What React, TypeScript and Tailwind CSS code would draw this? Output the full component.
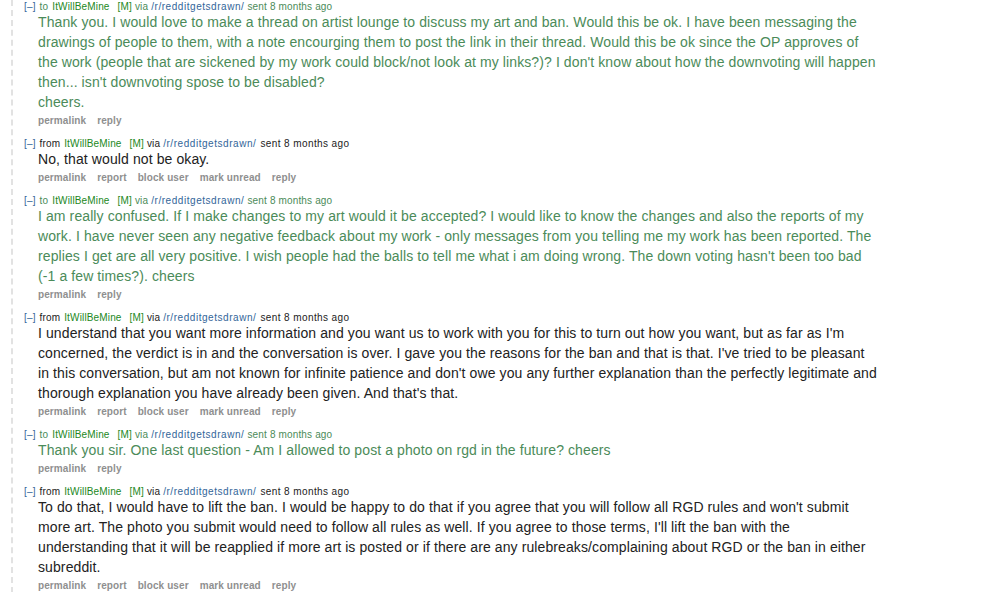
import React from 'react';

interface Message {
  dir: 'to' | 'from';
  paragraphs: string[];
}

const messages: Message[] = [
  {
    dir: 'to',
    paragraphs: [
      "Thank you. I would love to make a thread on artist lounge to discuss my art and ban. Would this be ok. I have been messaging the drawings of people to them, with a note encourging them to post the link in their thread. Would this be ok since the OP approves of the work (people that are sickened by my work could block/not look at my links?)? I don't know about how the downvoting will happen then... isn't downvoting spose to be disabled?",
      'cheers.',
    ],
  },
  { dir: 'from', paragraphs: ['No, that would not be okay.'] },
  {
    dir: 'to',
    paragraphs: [
      "I am really confused. If I make changes to my art would it be accepted? I would like to know the changes and also the reports of my work. I have never seen any negative feedback about my work - only messages from you telling me my work has been reported. The replies I get are all very positive. I wish people had the balls to tell me what i am doing wrong. The down voting hasn't been too bad (-1 a few times?). cheers",
    ],
  },
  {
    dir: 'from',
    paragraphs: [
      "I understand that you want more information and you want us to work with you for this to turn out how you want, but as far as I'm concerned, the verdict is in and the conversation is over. I gave you the reasons for the ban and that is that. I've tried to be pleasant in this conversation, but am not known for infinite patience and don't owe you any further explanation than the perfectly legitimate and thorough explanation you have already been given. And that's that.",
    ],
  },
  {
    dir: 'to',
    paragraphs: ['Thank you sir. One last question - Am I allowed to post a photo on rgd in the future? cheers'],
  },
  {
    dir: 'from',
    paragraphs: [
      "To do that, I would have to lift the ban. I would be happy to do that if you agree that you will follow all RGD rules and won't submit more art. The photo you submit would need to follow all rules as well. If you agree to those terms, I'll lift the ban with the understanding that it will be reapplied if more art is posted or if there are any rulebreaks/complaining about RGD or the ban in either subreddit.",
    ],
  },
];

const MessageEntry: React.FC<{ msg: Message }> = ({ msg }) => {
  const sent = msg.dir === 'to';
  const tagColor = sent ? 'text-[#4b8b59]' : 'text-[#222222]';
  const bodyColor = sent ? 'text-[#4b8b59]' : 'text-[#222222]';
  const buttons = sent ? ['permalink', 'reply'] : ['permalink', 'report', 'block user', 'mark unread', 'reply'];

  return (
    <div className="mb-[9px]">
      {/* tagline */}
      <div className={`h-[12px] text-[10px] leading-[14px] whitespace-nowrap tracking-[0.15px] ${tagColor}`}>
        <span className="text-[#336699]">[–]</span>
        <span className="ml-[4px]">{msg.dir}</span>
        <span className="ml-[4px] text-[#228822]">ItWillBeMine</span>
        <span className="ml-[8px] text-[#228822]">[M]</span>
        <span className="ml-[3px]">via</span>
        <span className="ml-[3px] tracking-[0.55px] text-[#336699]">/r/redditgetsdrawn/</span>
        <span className={sent ? 'ml-[3px]' : 'ml-[4px] tracking-[0.4px]'}>sent 8 months ago</span>
      </div>

      {/* body */}
      <div className={`ml-[14px] max-w-[840px] text-[14px] leading-[20px] tracking-[0.1px] ${bodyColor}`}>
        {msg.paragraphs.map((p, i) => (
          <p key={i}>{p}</p>
        ))}
      </div>

      {/* buttons */}
      <ul className="ml-[14px] mt-[2px] flex h-[14px] gap-[11px] text-[10px] font-bold leading-[14px] tracking-[0.1px] text-[#8f8f8f]">
        {buttons.map((b) => (
          <li key={b}>{b}</li>
        ))}
      </ul>
    </div>
  );
};

export default function App() {
  return (
    <div className="min-h-[592px] bg-white pl-[11px] font-['Liberation_Sans',Arial,sans-serif]">
      <div className="min-h-[592px] border-l-2 border-dashed border-[#e2e2e2] pl-[11px]">
        {messages.map((m, i) => (
          <MessageEntry key={i} msg={m} />
        ))}
      </div>
    </div>
  );
}
